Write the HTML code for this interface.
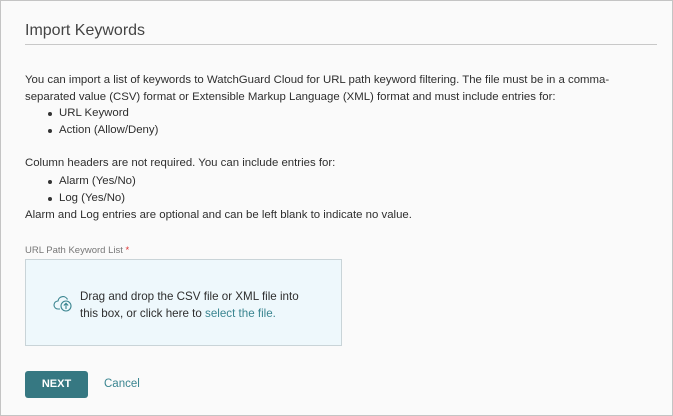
<!DOCTYPE html>
<html><head><style>
html,body{margin:0;padding:0}
body{width:673px;height:416px;position:relative;background:#fafafa;font-family:"Liberation Sans",sans-serif;color:#2e2e2e;overflow:hidden}
.frame{position:absolute;left:0;top:0;width:671px;height:414px;border:1px solid #c4c4c4}
.t{position:absolute;left:25px;top:22px;font-size:16px;color:#444}
.hr{position:absolute;left:25px;top:44px;width:632px;height:1px;background:#c8c8c8}
.p{position:absolute;left:25px;font-size:11.4px;line-height:16.7px;white-space:nowrap}
.b{position:absolute;left:48px;width:4px;height:4px;border-radius:50%;background:#333}
.lbl{position:absolute;left:25px;top:245px;font-size:9.5px;color:#777}
.box{position:absolute;left:25px;top:259px;width:315px;height:85px;border:1px solid #c9d4d8;background:#eef8fc}
.btn{position:absolute;left:25px;top:371px;width:63px;height:27px;background:#367882;border-radius:3px;color:#fff;font-weight:bold;font-size:11px;text-align:center;line-height:27px}
.cancel{position:absolute;left:104px;top:378px;font-size:11.5px;color:#3a8590}
</style></head><body>
<div class="frame"></div>
<div class="t">Import Keywords</div>
<div class="hr"></div>
<div class="p" style="top:72px">You can import a list of keywords to WatchGuard Cloud for URL path keyword filtering. The file must be in a comma-<br>separated value (CSV) format or Extensible Markup Language (XML) format and must include entries for:</div>
<div class="b" style="top:112px"></div><div class="p" style="left:59px;top:105px">URL Keyword</div>
<div class="b" style="top:129px"></div><div class="p" style="left:59px;top:122px">Action (Allow/Deny)</div>
<div class="p" style="top:155px">Column headers are not required. You can include entries for:</div>
<div class="b" style="top:180px"></div><div class="p" style="left:59px;top:173px">Alarm (Yes/No)</div>
<div class="b" style="top:197px"></div><div class="p" style="left:59px;top:190px">Log (Yes/No)</div>
<div class="p" style="top:207px">Alarm and Log entries are optional and can be left blank to indicate no value.</div>
<div class="lbl">URL Path Keyword List <span style="color:#d33">*</span></div>
<div class="box">
<svg style="position:absolute;left:27px;top:35px" width="20" height="18" viewBox="0 0 20 18" fill="none" stroke="#3a8590" stroke-width="1.1"><path d="M7 14H5a4 4 0 0 1 0-8 5 5 0 0 1 9.5-1.5"/><circle cx="13" cy="11" r="5"/><path d="M13 14V8.5M10.8 10.5L13 8.3l2.2 2.2"/></svg>
<div class="p" style="left:54px;top:29px;font-size:11.6px">Drag and drop the CSV file or XML file into<br>this box, or click here to <span style="color:#3a8590">select the file.</span></div>
</div>
<div class="btn">NEXT</div>
<div class="cancel">Cancel</div>
</body></html>
